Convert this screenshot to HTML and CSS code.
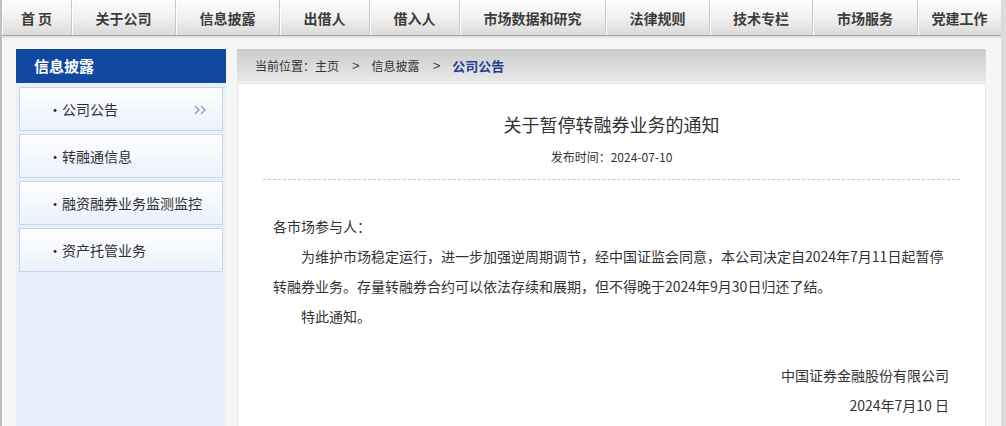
FILE: index.html
```html
<!DOCTYPE html>
<html lang="zh-CN">
<head>
<meta charset="utf-8">
<title>关于暂停转融券业务的通知</title>
<link rel="stylesheet" href="styles.css">
</head>
<body>
<div class="page">
  <nav class="topnav">
    <a class="nav-item w70">首&nbsp;页</a>
    <a class="nav-item w104">关于公司</a>
    <a class="nav-item w104">信息披露</a>
    <a class="nav-item w90">出借人</a>
    <a class="nav-item w90">借入人</a>
    <a class="nav-item w146">市场数据和研究</a>
    <a class="nav-item w104">法律规则</a>
    <a class="nav-item w103">技术专栏</a>
    <a class="nav-item w105">市场服务</a>
    <a class="nav-item wlast">党建工作</a>
  </nav>
  <div class="body-wrap">
    <aside class="sidebar">
      <div class="side-head">信息披露</div>
      <ul class="side-list">
        <li class="side-item"><span class="dot">·</span><span>公司公告</span>
          <svg class="arrows" width="13" height="10" viewBox="0 0 13 10"><polyline points="1,1 5,5 1,9" fill="none" stroke="#8c98ad" stroke-width="1.2"/><polyline points="7,1 11,5 7,9" fill="none" stroke="#8c98ad" stroke-width="1.2"/></svg>
        </li>
        <li class="side-item"><span class="dot">·</span><span>转融通信息</span></li>
        <li class="side-item"><span class="dot">·</span><span>融资融券业务监测监控</span></li>
        <li class="side-item"><span class="dot">·</span><span>资产托管业务</span></li>
      </ul>
    </aside>
    <main class="main">
      <div class="crumb">
        <span>当前位置：主页</span><span class="sep">&gt;</span><span>信息披露</span><span class="sep">&gt;</span><span class="cur">公司公告</span>
      </div>
      <article class="article">
        <h1 class="title">关于暂停转融券业务的通知</h1>
        <div class="date">发布时间：2024-07-10</div>
        <div class="rule"></div>
        <div class="content">
          <p class="line">各市场参与人：</p>
          <p class="para">为维护市场稳定运行，进一步加强逆周期调节，经中国证监会同意，本公司决定自2024年7月11日起暂停转融券业务。存量转融券合约可以依法存续和展期，但不得晚于2024年9月30日归还了结。</p>
          <p class="para">特此通知。</p>
          <p class="sign first">中国证券金融股份有限公司</p>
          <p class="sign">2024年7月10 日</p>
        </div>
      </article>
    </main>
  </div>
</div>
</body>
</html>
```

FILE: styles.css
```css
* { box-sizing: border-box; }
html, body { margin: 0; padding: 0; }
body {
  background: #dcdcdc;
  font-family: "Noto Sans CJK SC", "Noto Sans", sans-serif;
  color: #333;
  height: 426px;
  overflow: hidden;
}
.page {
  width: 1001px;
  height: 426px;
  border-left: 2px solid #bdbdbd;
  background: #f6f6f6;
}
.topnav {
  display: flex;
  height: 36px;
  background: linear-gradient(#fdfdfd, #f1f1f1 50%, #dadada);
  border-bottom: 1px solid #a9a9a9;
  box-shadow: 0 1px 2px #cfcfcf;
}
.nav-item {
  display: flex;
  align-items: center;
  justify-content: center;
  height: 35px;
  font-size: 14px;
  font-weight: bold;
  color: #3c3c3c;
  border-right: 1px solid #c9c9c9;
  box-shadow: inset 1px 0 0 #ffffff;
  text-decoration: none;
}
.w70 { width: 70px; }
.w90 { width: 90px; }
.w103 { width: 103px; }
.w104 { width: 104px; }
.w105 { width: 105px; }
.w146 { width: 146px; }
.wlast { flex: 1; border-right: none; }

.body-wrap {
  display: flex;
  padding: 13px 0 0 14px;
  height: 390px;
}
.sidebar {
  width: 210px;
  display: flex;
  flex-direction: column;
}
.side-head {
  height: 34px;
  background: #1249a0;
  color: #fff;
  font-size: 15px;
  font-weight: bold;
  line-height: 34px;
  padding-left: 18px;
}
.side-list {
  list-style: none;
  margin: 0;
  padding: 4px 3px;
  flex: 1;
  background: #e8f0fb;
  display: flex;
  flex-direction: column;
  gap: 3px;
}
.side-item {
  position: relative;
  height: 44px;
  width: 204px;
  border: 1px solid #c6d6ed;
  background: linear-gradient(#ffffff, #eaf1fb);
  font-size: 14px;
  color: #2f2f2f;
  line-height: 42px;
  padding-left: 28px;
  display: flex;
  align-items: center;
}
.dot {
  width: 14px;
  flex: none;
  text-align: center;
  overflow: hidden;
}
.arrows {
  position: absolute;
  right: 15px;
  top: 17px;
}
.main {
  margin-left: 11px;
  width: 749px;
  display: flex;
  flex-direction: column;
}
.crumb {
  height: 33px;
  background: linear-gradient(#cbcbcb, #e9e9e9);
  font-size: 12px;
  color: #333;
  display: flex;
  align-items: center;
  padding-left: 18px;
}
.crumb .sep { margin: 0 12px 0 13px; font-family: "Liberation Sans", sans-serif; font-size: 13px; color: #444; }
.crumb .cur { color: #1d3f93; font-weight: bold; font-size: 13px; }
.article {
  margin-top: 1px;
  flex: 1;
  background: #fff;
  border: 1px solid #e6e6e6;
  border-bottom: none;
  padding-top: 28px;
}
.title {
  margin: 0;
  font-size: 18px;
  font-weight: normal;
  line-height: 24px;
  text-align: center;
  color: #333;
}
.date {
  margin-top: 11px;
  font-size: 12px;
  line-height: 20px;
  text-align: center;
  color: #333;
}
.rule {
  margin: 12px 25px 0;
  border-top: 1px dashed #c8c8c8;
}
.content {
  padding: 31px 36px 0 35px;
  font-size: 14px;
  line-height: 30px;
  color: #333;
}
.content p { margin: 0; }
.para { text-indent: 2em; }
.sign { text-align: right; }
.sign.first { margin-top: 29px; }
```
